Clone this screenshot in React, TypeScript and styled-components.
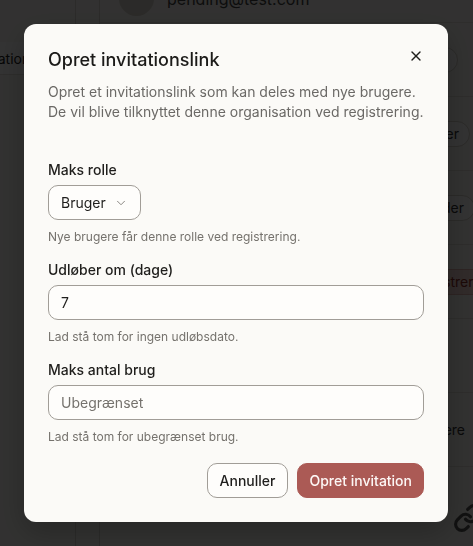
import React from "react";
import styled, {createGlobalStyle} from "styled-components";
import {X, ChevronDown, Link} from "lucide-react";

const GlobalStyle = createGlobalStyle`
  * {
    box-sizing: border-box;
  }

  html, body {
    margin: 0;
    padding: 0;
    height: 100%;
  }

  body {
    font-family: Inter, "Noto Sans", sans-serif;
    background: #f7f6f2;
    overflow: hidden;
  }
`;

/* background page (dimmed behind the dialog) */

const Page = styled.div`
  display: grid;
  grid-template-columns: 76px 24px 1fr;
  height: 546px;
  overflow: hidden;
  background: #f7f6f2;
  color: #222;
`;

const Sidebar = styled.aside`
  border-right: 1px solid #d9d6cf;
  padding-top: 42px;
  overflow: hidden;
`;

const NavItem = styled.div`
  height: 33px;
  line-height: 33px;
  margin-left: -30px;
  font-size: 14px;
  white-space: nowrap;
  background: #ffffff;
  border-bottom: 1px solid #e4e1da;
`;

const Rail = styled.div`
  border-right: 1px solid #d9d6cf;
`;

const Main = styled.main`
  display: flex;
  flex-direction: column;
  margin-top: -25px;
  overflow: hidden;
`;

const ProfileRow = styled.div`
  display: flex;
  align-items: center;
  gap: 13px;
  height: 48px;
  padding-left: 19px;
  border-bottom: 1px solid #e4e1da;
`;

const Avatar = styled.div`
  width: 35px;
  height: 35px;
  border-radius: 50%;
  background: #d8d3ca;
`;

const Email = styled.span`
  font-size: 16px;
  color: #444;
`;

const ListRow = styled.div`
  display: flex;
  align-items: center;
  justify-content: flex-end;
  height: 74px;
  border-bottom: 1px solid #e4e1da;
`;

const Badge = styled.span<{$tone: "plain" | "danger" | "text"; $shift: number}>`
  margin-right: ${p => p.$shift}px;
  padding: 0 10px;
  height: 26px;
  line-height: 24px;
  font-size: 14px;
  white-space: nowrap;
  border: 1px solid ${p => (p.$tone === "text" ? "transparent" : p.$tone === "danger" ? "#e0b3ad" : "#d6d2ca")};
  background: ${p => (p.$tone === "danger" ? "#f3d5d1" : p.$tone === "text" ? "transparent" : "#ffffff")};
  color: ${p => (p.$tone === "danger" ? "#8c2f28" : "#333")};
  border-radius: ${p => (p.$tone === "danger" ? "4px" : "13px")};
`;

const CornerIcon = styled.div`
  display: flex;
  justify-content: flex-end;
  padding-top: 36px;
  margin-right: -10px;
  color: #555;
`;

/* dialog */

const Overlay = styled.div`
  position: fixed;
  inset: 0;
  display: flex;
  align-items: center;
  justify-content: center;
  background: rgba(0, 0, 0, 0.8);
`;

const Dialog = styled.div`
  position: relative;
  width: 424px;
  margin-right: 1px;
  padding: 24px;
  background: #fbfaf7;
  border-radius: 12px;
  box-shadow: 0 10px 30px rgba(0, 0, 0, 0.25);
`;

const CloseButton = styled.button`
  position: absolute;
  top: 24px;
  right: 24px;
  width: 16px;
  height: 16px;
  padding: 0;
  border: 0;
  background: transparent;
  color: #1f1e1c;
  display: flex;
  cursor: pointer;
`;

const Title = styled.h2`
  margin: 0;
  font-size: 18px;
  line-height: 24px;
  font-weight: 500;
  color: #1c1b19;
`;

const Description = styled.p`
  margin: 10px 0 0;
  font-size: 14px;
  line-height: 20px;
  color: #6b6966;
  white-space: nowrap;
`;

const Form = styled.form`
  display: flex;
  flex-direction: column;
  gap: 15px;
  margin-top: 38px;
`;

const Field = styled.div`
  display: flex;
  flex-direction: column;
`;

const Label = styled.label`
  font-size: 14px;
  line-height: 20px;
  font-weight: 500;
  color: #1f1e1c;
  margin-bottom: 5px;
`;

const SelectButton = styled.button`
  align-self: flex-start;
  display: flex;
  align-items: center;
  gap: 8px;
  height: 35px;
  padding: 0 12px;
  border: 1px solid #a19d97;
  border-radius: 10px;
  background: #fefdfb;
  font-family: inherit;
  font-size: 14px;
  color: #1f1e1c;

  svg {
    color: #7a7772;
  }
`;

const Input = styled.input`
  height: 35px;
  width: 100%;
  padding: 0 12px;
  border: 1px solid #a19d97;
  border-radius: 10px;
  background: #fefdfb;
  font-family: inherit;
  font-size: 14px;
  color: #1f1e1c;
  outline: none;

  &::placeholder {
    color: #75726d;
  }
`;

const Hint = styled.p`
  margin: 9px 0 0;
  font-size: 12px;
  line-height: 16px;
  color: #75726d;
`;

const Actions = styled.div`
  display: flex;
  justify-content: flex-end;
  gap: 9px;
  margin-top: 18px;
`;

const Button = styled.button<{$primary?: boolean}>`
  height: 35px;
  padding: 0 ${p => (p.$primary ? 11 : 12)}px;
  border-radius: 10px;
  font-family: inherit;
  font-size: 14px;
  font-weight: 500;
  cursor: pointer;
  border: 1px solid ${p => (p.$primary ? "#ab5a55" : "#a19d97")};
  background: ${p => (p.$primary ? "#ab5a55" : "#fefdfb")};
  color: ${p => (p.$primary ? "#fdf7f5" : "#1f1e1c")};
`;

const rows: {label: string; tone: "plain" | "danger" | "text"; shift: number}[] = [
    {label: "Ejer", tone: "plain", shift: 15},
    {label: "Bruger", tone: "plain", shift: 3},
    {label: "Leder", tone: "plain", shift: -2},
    {label: "Registreret", tone: "danger", shift: -24},
    {label: "", tone: "text", shift: 0},
    {label: "Annullere", tone: "text", shift: -3},
];

const App = () => {
    return (
        <>
            <GlobalStyle/>
            <Page>
                <Sidebar>
                    <NavItem>Invitationer</NavItem>
                </Sidebar>
                <Rail/>
                <Main>
                    <ProfileRow>
                        <Avatar/>
                        <Email>pending@test.com</Email>
                    </ProfileRow>
                    {rows.map((row, i) => (
                        <ListRow key={i}>
                            {row.label && (
                                <Badge $tone={row.tone} $shift={row.shift}>{row.label}</Badge>
                            )}
                        </ListRow>
                    ))}
                    <CornerIcon>
                        <Link size={30} strokeWidth={2.5}/>
                    </CornerIcon>
                </Main>
            </Page>

            <Overlay>
                <Dialog role="dialog">
                    <CloseButton aria-label="Luk">
                        <X size={16} strokeWidth={2}/>
                    </CloseButton>
                    <Title>Opret invitationslink</Title>
                    <Description>
                        Opret et invitationslink som kan deles med nye brugere.
                        <br/>
                        De vil blive tilknyttet denne organisation ved registrering.
                    </Description>

                    <Form onSubmit={e => e.preventDefault()}>
                        <Field>
                            <Label>Maks rolle</Label>
                            <SelectButton type="button">
                                Bruger
                                <ChevronDown size={14} strokeWidth={1.5}/>
                            </SelectButton>
                            <Hint>Nye brugere får denne rolle ved registrering.</Hint>
                        </Field>
                        <Field>
                            <Label>Udløber om (dage)</Label>
                            <Input defaultValue="7"/>
                            <Hint>Lad stå tom for ingen udløbsdato.</Hint>
                        </Field>
                        <Field>
                            <Label>Maks antal brug</Label>
                            <Input placeholder="Ubegrænset"/>
                            <Hint>Lad stå tom for ubegrænset brug.</Hint>
                        </Field>
                    </Form>

                    <Actions>
                        <Button type="button">Annuller</Button>
                        <Button type="button" $primary>Opret invitation</Button>
                    </Actions>
                </Dialog>
            </Overlay>
        </>
    );
};

export default App;
